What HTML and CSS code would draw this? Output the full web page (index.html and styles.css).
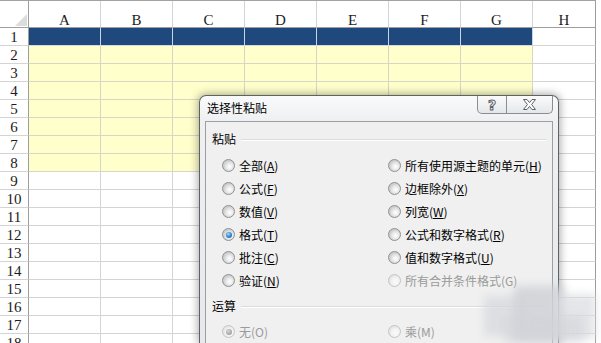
FILE: index.html
```html
<!DOCTYPE html>
<html lang="zh-CN">
<head>
<meta charset="utf-8">
<title>选择性粘贴</title>
<link rel="stylesheet" href="styles.css">
</head>
<body>
<div class="sheet">
  <span class="corner"><i class="tri"></i></span><span class="ch">A</span><span class="ch">B</span><span class="ch">C</span><span class="ch">D</span><span class="ch">E</span><span class="ch">F</span><span class="ch">G</span><span class="ch">H</span>
  <span class="rh">1</span><span class="b"></span><span class="b"></span><span class="b"></span><span class="b"></span><span class="b"></span><span class="b"></span><span class="b"></span><span></span>
  <span class="rh">2</span><span class="y"></span><span class="y"></span><span class="y"></span><span class="y"></span><span class="y"></span><span class="y"></span><span class="y"></span><span></span>
  <span class="rh">3</span><span class="y"></span><span class="y"></span><span class="y"></span><span class="y"></span><span class="y"></span><span class="y"></span><span class="y"></span><span></span>
  <span class="rh">4</span><span class="y"></span><span class="y"></span><span class="y"></span><span class="y"></span><span class="y"></span><span class="y"></span><span class="y"></span><span></span>
  <span class="rh">5</span><span class="y"></span><span class="y"></span><span class="y"></span><span class="y"></span><span class="y"></span><span class="y"></span><span class="y"></span><span></span>
  <span class="rh">6</span><span class="y"></span><span class="y"></span><span class="y"></span><span class="y"></span><span class="y"></span><span class="y"></span><span class="y"></span><span></span>
  <span class="rh">7</span><span class="y"></span><span class="y"></span><span class="y"></span><span class="y"></span><span class="y"></span><span class="y"></span><span class="y"></span><span></span>
  <span class="rh">8</span><span class="y"></span><span class="y"></span><span class="y"></span><span class="y"></span><span class="y"></span><span class="y"></span><span class="y"></span><span></span>
  <span class="rh">9</span><span></span><span></span><span></span><span></span><span></span><span></span><span></span><span></span>
  <span class="rh">10</span><span></span><span></span><span></span><span></span><span></span><span></span><span></span><span></span>
  <span class="rh">11</span><span></span><span></span><span></span><span></span><span></span><span></span><span></span><span></span>
  <span class="rh">12</span><span></span><span></span><span></span><span></span><span></span><span></span><span></span><span></span>
  <span class="rh">13</span><span></span><span></span><span></span><span></span><span></span><span></span><span></span><span></span>
  <span class="rh">14</span><span></span><span></span><span></span><span></span><span></span><span></span><span></span><span></span>
  <span class="rh">15</span><span></span><span></span><span></span><span></span><span></span><span></span><span></span><span></span>
  <span class="rh">16</span><span></span><span></span><span></span><span></span><span></span><span></span><span></span><span></span>
  <span class="rh">17</span><span></span><span></span><span></span><span></span><span></span><span></span><span></span><span></span>
  <span class="rh">18</span><span></span><span></span><span></span><span></span><span></span><span></span><span></span><span></span>
</div>

<div class="dlg">
  <div class="titlebar">
    <span class="title">选择性粘贴</span>
    <div class="caps">
      <span class="cap help">?</span>
      <span class="cap close"><svg width="13" height="11" viewBox="0 0 13 11"><polygon points="0.5,0.5 4,0.5 6.5,3.6 9,0.5 12.5,0.5 8.6,5.5 12.5,10.5 9,10.5 6.5,7.4 4,10.5 0.5,10.5 4.4,5.5" fill="#fdfdfd" stroke="#5e6166" stroke-width="1" stroke-linejoin="round"/></svg></span>
    </div>
  </div>
  <div class="client">
    <div class="group"><span class="glabel">粘贴</span><i class="gline"></i></div>
    <div class="opts">
      <div class="opt"><span class="radio"></span><span>全部(<u>A</u>)</span></div>
      <div class="opt"><span class="radio"></span><span>所有使用源主题的单元(<u>H</u>)</span></div>
      <div class="opt"><span class="radio"></span><span>公式(<u>F</u>)</span></div>
      <div class="opt"><span class="radio"></span><span>边框除外(<u>X</u>)</span></div>
      <div class="opt"><span class="radio"></span><span>数值(<u>V</u>)</span></div>
      <div class="opt"><span class="radio"></span><span>列宽(<u>W</u>)</span></div>
      <div class="opt"><span class="radio on"></span><span>格式(<u>T</u>)</span></div>
      <div class="opt"><span class="radio"></span><span>公式和数字格式(<u>R</u>)</span></div>
      <div class="opt"><span class="radio"></span><span>批注(<u>C</u>)</span></div>
      <div class="opt"><span class="radio"></span><span>值和数字格式(<u>U</u>)</span></div>
      <div class="opt"><span class="radio"></span><span>验证(<u>N</u>)</span></div>
      <div class="opt off"><span class="radio"></span><span>所有合并条件格式(G)</span></div>
    </div>
    <div class="group g2"><span class="glabel">运算</span><i class="gline"></i></div>
    <div class="opts o2">
      <div class="opt off"><span class="radio on"></span><span>无(O)</span></div>
      <div class="opt off"><span class="radio"></span><span>乘(M)</span></div>
    </div>
  </div>
</div>

<div class="blot">
  <i class="bk k1"></i><i class="bk k2"></i><i class="bk k3"></i><i class="bk k4"></i>
</div>
</body>
</html>
```

FILE: styles.css
```css
* { box-sizing: border-box; margin: 0; padding: 0; }
html, body { width: 601px; height: 343px; overflow: hidden; background: #fff; }
body { position: relative; font-family: "Liberation Serif", serif; }

.sheet {
  display: grid;
  grid-template-columns: 29px repeat(7, 72px) 63px;
  grid-template-rows: 27px;
  grid-auto-rows: 18px;
  border-top: 1px solid #a2a2a2;
  width: 596px;
  height: 343px;
  overflow: hidden;
}
.sheet > span {
  border-right: 1px solid #d4d4d4;
  border-bottom: 1px solid #d4d4d4;
}
.sheet > span:nth-child(9n) { border-right-color: #9c9c9c; }

.corner {
  display: flex;
  justify-content: flex-end;
  align-items: flex-end;
  padding: 0 1px 1px 0;
  border-bottom-color: #9e9e9e !important;
  border-right-color: #9e9e9e !important;
}
.tri {
  display: block;
  width: 12px;
  height: 12px;
  background: #dcdcdc;
  clip-path: polygon(100% 0, 100% 100%, 0 100%);
}
.ch {
  font-size: 15px;
  line-height: 15px;
  padding-top: 12px;
  text-align: center;
  color: #1c1c1c;
  border-bottom-color: #9e9e9e !important;
  border-right-color: #e2e2e2;
}
.rh {
  font-size: 15px;
  line-height: 15px;
  padding-top: 2px;
  text-align: center;
  color: #1c1c1c;
  border-right-color: #9e9e9e !important;
  border-bottom-color: #d8d8d8;
}
.b { background: #1f497d; border-right-color: #c9d4e2 !important; border-bottom-color: #d3dae4 !important; }
.y { background: #ffffcc; border-right-color: #d7d7c5 !important; border-bottom-color: #d7d7c5 !important; }

/* dialog */
.dlg {
  position: absolute;
  left: 199px;
  top: 95px;
  width: 360px;
  height: 248px;
  border: 1px solid #5f6164;
  border-bottom: none;
  border-radius: 7px 7px 0 0;
  padding: 0 5px;
  background: linear-gradient(to bottom, #f9fafb 0, #eef0f2 24px, #e6e9ec 100%);
  box-shadow: 0 0 8px 1px rgba(0, 0, 0, 0.35);
  font-family: "Noto Sans CJK SC", "Noto Sans", sans-serif;
  font-size: 12px;
  color: #111;
  display: flex;
  flex-direction: column;
}
.titlebar {
  height: 25px;
  flex: none;
  display: flex;
  justify-content: space-between;
  align-items: flex-start;
}
.title {
  padding: 4px 0 0 2px;
  line-height: 16px;
  font-size: 12px;
  color: #000;
}
.caps {
  display: flex;
  width: 76px;
  height: 18px;
  border: 1px solid #8a8d91;
  border-top: none;
  border-radius: 0 0 5px 5px;
  overflow: hidden;
  background: linear-gradient(to bottom, #fbfbfc, #e4e7ea);
}
.cap {
  display: flex;
  align-items: center;
  justify-content: center;
  height: 17px;
}
.help {
  width: 29px;
  flex: none;
  border-right: 1px solid #8a8d91;
  font-family: "DejaVu Sans", sans-serif;
  font-weight: bold;
  font-size: 14px;
  color: #fdfdfd;
  -webkit-text-stroke: 1px #5e6166;
  padding-top: 1px;
}
.close { flex: 1; }

.client {
  flex: 1;
  border: 1px solid #9b9ea2;
  border-bottom: none;
  background: #f0f0f0;
  padding: 0 6px 0 0;
  overflow: hidden;
}
.group {
  display: flex;
  align-items: center;
  margin-top: 9px;
  height: 16px;
  padding-left: 6px;
}
.g2 { margin-top: 6px; }
.glabel { line-height: 16px; color: #000; }
.gline {
  flex: 1;
  margin: 1px 0 0 5px;
  background: #d5dde3;
  border-bottom: 1px solid #fff;
  height: 2px;
}
.opts {
  display: grid;
  grid-template-columns: 166px 1fr;
  grid-auto-rows: 23px;
  padding-left: 16px;
  margin-top: 7px;
}
.o2 { margin-top: 6px; }
.opt {
  display: flex;
  align-items: center;
  gap: 4px;
  line-height: 16px;
  white-space: nowrap;
  color: #000;
}
.opt u { text-decoration: underline; text-underline-offset: 1px; }
.radio {
  position: relative;
  flex: none;
  width: 13px;
  height: 13px;
  border-radius: 50%;
  border: 1px solid #8e9194;
  background: radial-gradient(circle at 60% 60%, #ffffff 0, #f3f3f3 2px, #e2e2e2 4px, #cdcdcd 6px);
}
.radio.on::after {
  content: "";
  position: absolute;
  left: 2.5px;
  top: 2.5px;
  width: 6px;
  height: 6px;
  border-radius: 50%;
  background: radial-gradient(circle at 40% 35%, #a9dcff 0, #3a8fd6 45%, #0b4f9c 100%);
}
.off { color: #9a9a9a; }
.off .radio {
  border-color: #c2c4c6;
  background: radial-gradient(circle at 60% 60%, #fafafa 0, #f2f2f2 4px, #e6e6e6 6px);
}
.off .radio.on::after { background: radial-gradient(circle at 40% 35%, #d8d8d8 0, #a8a8a8 60%, #8c8c8c 100%); }

/* blurred watermark */
.blot {
  position: absolute;
  left: 484px;
  top: 286px;
  width: 117px;
  height: 57px;
  filter: blur(4px);
}
.bk { position: absolute; display: block; }
.k1 { left: 0; top: 10px; width: 40px; height: 40px; background: rgba(214, 216, 220, 0.75); }
.k2 { left: 30px; top: 0; width: 50px; height: 57px; background: rgba(205, 208, 212, 0.8); }
.k3 { left: 72px; top: 8px; width: 40px; height: 45px; background: rgba(220, 222, 226, 0.75); }
.k4 { left: 20px; top: 30px; width: 80px; height: 27px; background: rgba(210, 212, 216, 0.6); }
```
